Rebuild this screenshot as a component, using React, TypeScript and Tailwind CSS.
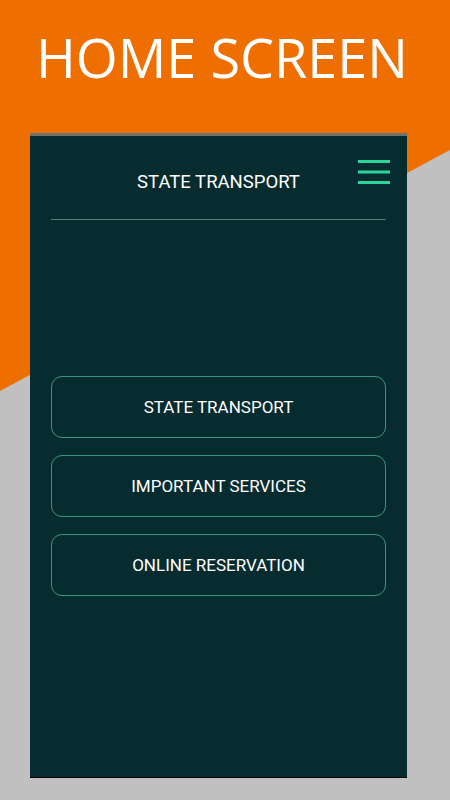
const buttons = ['STATE TRANSPORT', 'IMPORTANT SERVICES', 'ONLINE RESERVATION'];

function MenuIcon() {
  return (
    <svg width="32" height="25" viewBox="0 0 32 25" fill="none">
      <path d="M0 1.5h32M0 12h32M0 22.5h32" stroke="#2bd49b" strokeWidth="3" />
    </svg>
  );
}

export default function App() {
  return (
    <div className="relative h-[800px] w-[450px] overflow-hidden bg-[#c0c0c0]">
      {/* orange diagonal backdrop */}
      <div className="absolute inset-0 bg-[#ee6f00] [clip-path:polygon(0_0,100%_0,100%_150px,0_391px)]" />

      <div className="relative flex flex-col">
        <h1
          className="pt-[27px] pr-[6px] text-center text-[54px] leading-[60px] text-white"
          style={{ fontFamily: '"Open Sans", sans-serif' }}
        >
          HOME SCREEN
        </h1>

        <div
          className="relative ml-[30px] mt-[46px] flex h-[645px] w-[377px] flex-col border-t-[3px] border-b border-t-[#70736c] border-b-black bg-[#072c2f] px-[21px]"
          style={{ fontFamily: 'Roboto, sans-serif' }}
        >
          <div className="pt-[34px] text-center text-[18.5px] leading-[24px] text-white">STATE TRANSPORT</div>
          <button className="absolute right-[17px] top-[24px]">
            <MenuIcon />
          </button>

          <div className="mt-[25px] h-px bg-[#4f7f76]" />

          <div className="mt-[156px] flex flex-col gap-[17px]">
            {buttons.map((label) => (
              <button
                key={label}
                className="flex h-[62px] items-center justify-center rounded-[11px] border border-[#3a9480] pt-[2px] text-[17px] text-white"
              >
                {label}
              </button>
            ))}
          </div>
        </div>
      </div>
    </div>
  );
}
